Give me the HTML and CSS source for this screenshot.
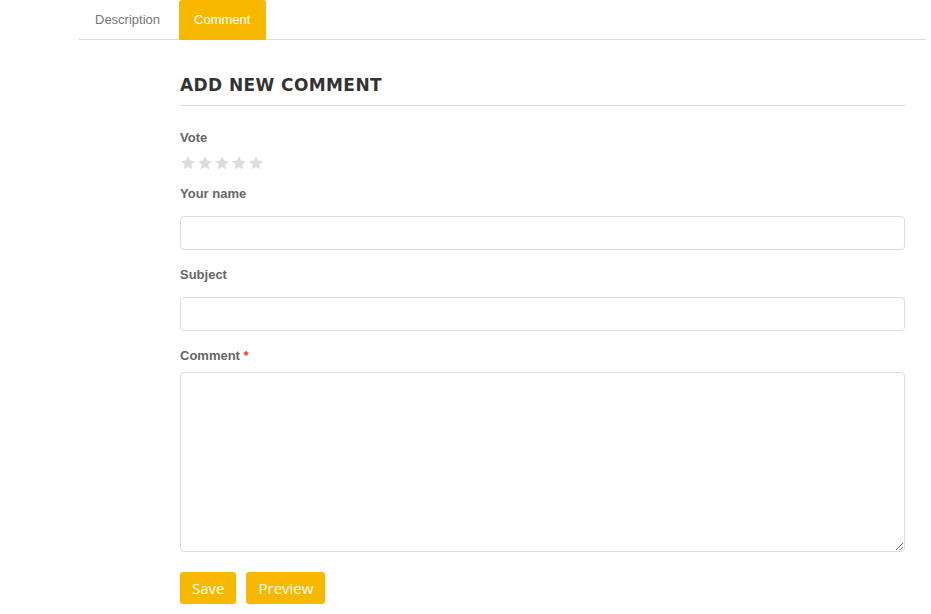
FILE: index.html
```html
<!DOCTYPE html>
<html>
<head>
<meta charset="utf-8">
<link rel="stylesheet" href="styles.css">
</head>
<body>
<div class="page">
  <ul class="tabs">
    <li class="tab">Description</li>
    <li class="tab active">Comment</li>
  </ul>
  <div class="panel">
    <h2 class="title">ADD NEW COMMENT</h2>
    <form class="form">
      <div class="field">
        <label class="label">Vote</label>
        <div class="stars">
          <svg viewBox="0 0 24 24" class="star"><path d="M12 1.8l3.1 6.6 7.2.9-5.3 5 1.4 7.1L12 17.9l-6.4 3.5 1.4-7.1-5.3-5 7.2-.9z"/></svg>
          <svg viewBox="0 0 24 24" class="star"><path d="M12 1.8l3.1 6.6 7.2.9-5.3 5 1.4 7.1L12 17.9l-6.4 3.5 1.4-7.1-5.3-5 7.2-.9z"/></svg>
          <svg viewBox="0 0 24 24" class="star"><path d="M12 1.8l3.1 6.6 7.2.9-5.3 5 1.4 7.1L12 17.9l-6.4 3.5 1.4-7.1-5.3-5 7.2-.9z"/></svg>
          <svg viewBox="0 0 24 24" class="star"><path d="M12 1.8l3.1 6.6 7.2.9-5.3 5 1.4 7.1L12 17.9l-6.4 3.5 1.4-7.1-5.3-5 7.2-.9z"/></svg>
          <svg viewBox="0 0 24 24" class="star"><path d="M12 1.8l3.1 6.6 7.2.9-5.3 5 1.4 7.1L12 17.9l-6.4 3.5 1.4-7.1-5.3-5 7.2-.9z"/></svg>
        </div>
      </div>
      <div class="field">
        <label class="label">Your name</label>
        <input class="input" type="text">
      </div>
      <div class="field">
        <label class="label">Subject</label>
        <input class="input" type="text">
      </div>
      <div class="field">
        <label class="label">Comment <span class="req">*</span></label>
        <textarea class="textarea"></textarea>
      </div>
      <div class="actions">
        <button type="button" class="btn">Save</button>
        <button type="button" class="btn">Preview</button>
      </div>
    </form>
  </div>
</div>
</body>
</html>
```
FILE: styles.css
```css
* { box-sizing: border-box; }
html, body { margin: 0; padding: 0; background: #fff; }
body { font-family: "Liberation Sans", Arial, sans-serif; color: #555; }
.page { margin-left: 79px; width: 847px; }
.tabs {
  list-style: none; margin: 0; padding: 0;
  display: flex; gap: 3px;
  border-bottom: 1px solid #dddddd;
  height: 40px;
}
.tab {
  font-size: 13px; color: #777;
  padding: 0 16px; line-height: 39px;
  border-radius: 3px 3px 0 0;
}
.active { background: #f9b800; color: #fff; padding: 0 16px 0 15px; height: 40px; }
.panel { padding: 0 21px 0 101px; }
.title {
  margin: 35px 0 0; padding-bottom: 10px;
  font-family: "DejaVu Sans", sans-serif; font-weight: 700;
  font-size: 17px; letter-spacing: 0.4px; color: #333;
  border-bottom: 1px solid #dddddd; line-height: 20px;
}
.form { padding-top: 24px; }
.field { display: flex; flex-direction: column; }
.label { font-size: 13px; font-weight: 700; color: #666; line-height: 16px; }
.req { color: #e33; }
.stars { display: flex; gap: 1px; margin: 9px 0 15px; }
.star { width: 16px; height: 16px; fill: #dcdcdc; }
.input {
  margin: 14px 0 17px; height: 34px; width: 100%;
  border: 1px solid #ddd; border-radius: 4px;
}
.textarea {
  margin: 8px 0 20px; height: 180px; width: 100%;
  border: 1px solid #ddd; border-radius: 4px; resize: vertical;
}
.actions { display: flex; gap: 10px; }
.btn {
  background: #f9b800; color: #fff; border: 0; border-radius: 3px;
  height: 32px; padding: 0 12px; font-family: "Open Sans", sans-serif; font-size: 15px;
}
```
